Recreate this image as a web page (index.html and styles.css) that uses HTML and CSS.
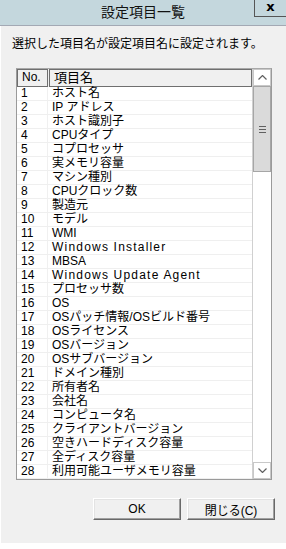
FILE: index.html
```html
<!DOCTYPE html>
<html lang="ja">
<head>
    <meta charset="UTF-8">
    <title>設定項目一覧</title>
    <link rel="stylesheet" href="styles.css">
</head>
<body>
    <div class="window">
        <div class="titlebar">
            <span></span>
            <span class="title">設定項目一覧</span>
            <span class="close">x</span>
        </div>
        <div class="dialog">
            <p class="hint">選択した項目名が設定項目名に設定されます。</p>
            <div class="listbox">
                <div class="list">
                    <div class="head">
                        <span class="cell no">No.</span>
                        <span class="cell name">項目名</span>
                    </div>
                    <div class="row"><span class="no">1</span><span class="name">ホスト名</span></div>
                    <div class="row"><span class="no">2</span><span class="name">IP アドレス</span></div>
                    <div class="row"><span class="no">3</span><span class="name">ホスト識別子</span></div>
                    <div class="row"><span class="no">4</span><span class="name">CPUタイプ</span></div>
                    <div class="row"><span class="no">5</span><span class="name">コプロセッサ</span></div>
                    <div class="row"><span class="no">6</span><span class="name">実メモリ容量</span></div>
                    <div class="row"><span class="no">7</span><span class="name">マシン種別</span></div>
                    <div class="row"><span class="no">8</span><span class="name">CPUクロック数</span></div>
                    <div class="row"><span class="no">9</span><span class="name">製造元</span></div>
                    <div class="row"><span class="no">10</span><span class="name">モデル</span></div>
                    <div class="row"><span class="no">11</span><span class="name">WMI</span></div>
                    <div class="row"><span class="no">12</span><span class="name wide">Windows Installer</span></div>
                    <div class="row"><span class="no">13</span><span class="name">MBSA</span></div>
                    <div class="row"><span class="no">14</span><span class="name wide">Windows Update Agent</span></div>
                    <div class="row"><span class="no">15</span><span class="name">プロセッサ数</span></div>
                    <div class="row"><span class="no">16</span><span class="name">OS</span></div>
                    <div class="row"><span class="no">17</span><span class="name">OSパッチ情報/OSビルド番号</span></div>
                    <div class="row"><span class="no">18</span><span class="name">OSライセンス</span></div>
                    <div class="row"><span class="no">19</span><span class="name">OSバージョン</span></div>
                    <div class="row"><span class="no">20</span><span class="name">OSサブバージョン</span></div>
                    <div class="row"><span class="no">21</span><span class="name">ドメイン種別</span></div>
                    <div class="row"><span class="no">22</span><span class="name">所有者名</span></div>
                    <div class="row"><span class="no">23</span><span class="name">会社名</span></div>
                    <div class="row"><span class="no">24</span><span class="name">コンピュータ名</span></div>
                    <div class="row"><span class="no">25</span><span class="name">クライアントバージョン</span></div>
                    <div class="row"><span class="no">26</span><span class="name">空きハードディスク容量</span></div>
                    <div class="row"><span class="no">27</span><span class="name">全ディスク容量</span></div>
                    <div class="row"><span class="no">28</span><span class="name">利用可能ユーザメモリ容量</span></div>
                </div>
                <div class="scrollbar">
                    <div class="arrow">
                        <svg width="9" height="5" viewBox="0 0 9 5"><polyline points="0.5,4.5 4.5,0.5 8.5,4.5" fill="none" stroke="#606060" stroke-width="1.2"/></svg>
                    </div>
                    <div class="track">
                        <div class="thumb">
                            <svg width="7" height="7" viewBox="0 0 7 7"><path d="M0 0.5H7M0 3.5H7M0 6.5H7" stroke="#606060" stroke-width="1"/></svg>
                        </div>
                    </div>
                    <div class="arrow">
                        <svg width="9" height="5" viewBox="0 0 9 5"><polyline points="0.5,0.5 4.5,4.5 8.5,0.5" fill="none" stroke="#606060" stroke-width="1.2"/></svg>
                    </div>
                </div>
            </div>
            <div class="buttons">
                <button class="btn ok">OK</button>
                <button class="btn">閉じる(C)</button>
            </div>
        </div>
    </div>
</body>
</html>
```

FILE: styles.css
```css
body {
    margin: 0;
    padding: 0;
    background-color: #ffffff;
    font-family: "Liberation Sans", "Noto Sans CJK JP", sans-serif;
    font-size: 12px;
    color: #000;
}
.window {
    width: 286px;
    height: 549px;
    display: flex;
    flex-direction: column;
}
.titlebar {
    height: 25px;
    background-color: #c4d7dd;
    border-bottom: 1px solid #a3a9b4;
    display: grid;
    grid-template-columns: 32px 1fr 32px;
}
.title {
    text-align: center;
    font-size: 14px;
    line-height: 25px;
    color: #111;
}
.close {
    height: 16px;
    border-left: 1px solid #555;
    border-bottom: 1px solid #555;
    text-align: center;
    font-family: "DejaVu Sans", sans-serif;
    font-weight: bold;
    font-size: 13px;
    line-height: 13px;
}
.dialog {
    height: 517px;
    margin-left: 1px;
    background-color: #f0f0f0;
    display: flex;
    flex-direction: column;
}
.hint {
    margin: 11px 0 0 11px;
    line-height: 14px;
    height: 14px;
    white-space: nowrap;
}
.listbox {
    margin: 17px 0 0 15px;
    width: 254px;
    height: 410px;
    border: 1px solid #9a9a9a;
    border-top: 1px solid #a8a8a8;
    background-color: #fff;
    display: flex;
}
.list {
    flex: 1;
    display: flex;
    flex-direction: column;
}
.head {
    display: flex;
    height: 18px;
    background-color: #f0f0f0;
}
.head .cell {
    border: 1px solid #6f6f6f;
    line-height: 15px;
    padding-left: 4px;
    box-sizing: border-box;
}
.head .no {
    width: 31px;
}
.head .name {
    flex: 1;
    margin-left: 1px;
    font-size: 13px;
}
.row {
    display: flex;
    height: 14px;
    line-height: 13px;
    border-bottom: 1px solid #efefef;
    box-sizing: border-box;
    white-space: nowrap;
}
.row .no {
    width: 31px;
    padding-left: 4px;
    box-sizing: border-box;
    border-right: 1px solid #f0f0f0;
}
.row .name {
    padding-left: 4px;
}
.row .wide {
    letter-spacing: 1.2px;
}
.scrollbar {
    width: 18px;
    display: flex;
    flex-direction: column;
    border-left: 1px solid #d0d0d0;
}
.arrow {
    height: 17px;
    display: flex;
    align-items: center;
    justify-content: center;
    border: 1px solid #c8c8c8;
    box-sizing: border-box;
}
.track {
    flex: 1;
    background-color: #fff;
}
.thumb {
    height: 86px;
    background-color: #dadada;
    border: 1px solid #a6a6a6;
    box-sizing: border-box;
    display: flex;
    align-items: center;
    justify-content: center;
}
.buttons {
    margin-top: 18px;
    padding-right: 11px;
    display: flex;
    justify-content: flex-end;
    gap: 6px;
}
.btn {
    width: 88px;
    height: 22px;
    background-color: #f0f0f0;
    border: 1px solid;
    border-color: #ffffff #696969 #696969 #ffffff;
    box-shadow: inset -1px -1px #a0a0a0, inset 1px 1px #e3e3e3;
    font-family: "Liberation Sans", "Noto Sans CJK JP", sans-serif;
    font-size: 12px;
    padding: 0;
    color: #000;
}
```
